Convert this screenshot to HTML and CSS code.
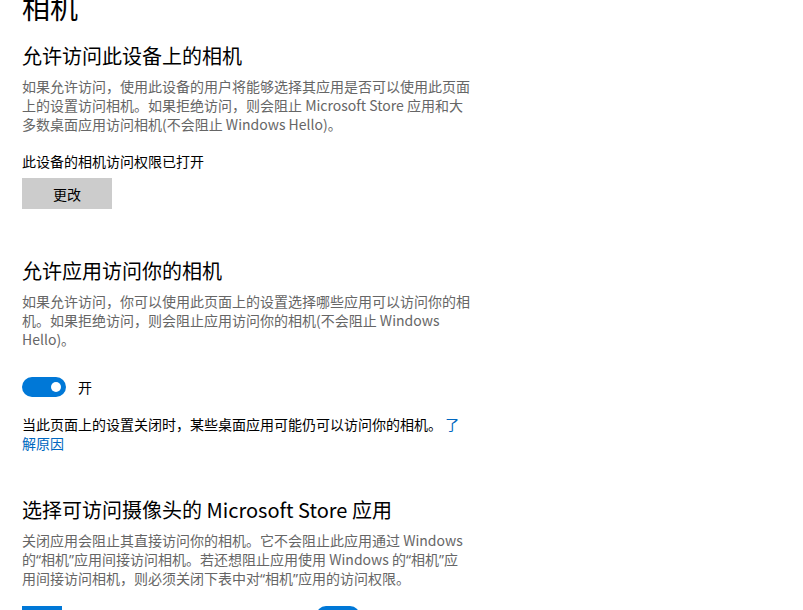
FILE: index.html
```html
<!DOCTYPE html>
<html lang="zh-CN">
<head>
<meta charset="utf-8">
<title>相机</title>
<link rel="stylesheet" href="styles.css">
</head>
<body>
<main class="page">
  <h1 class="title">相机</h1>

  <section class="section">
    <h2 class="heading">允许访问此设备上的相机</h2>
    <p class="desc">如果允许访问，使用此设备的用户将能够选择其应用是否可以使用此页面<br>上的设置访问相机。如果拒绝访问，则会阻止 Microsoft Store 应用和大<br>多数桌面应用访问相机(不会阻止 Windows Hello)。</p>
    <p class="status">此设备的相机访问权限已打开</p>
    <button class="btn">更改</button>
  </section>

  <section class="section section-2">
    <h2 class="heading">允许应用访问你的相机</h2>
    <p class="desc">如果允许访问，你可以使用此页面上的设置选择哪些应用可以访问你的相<br>机。如果拒绝访问，则会阻止应用访问你的相机(不会阻止 Windows<br>Hello)。</p>
    <div class="toggle-row">
      <span class="toggle"><span class="knob"></span></span>
      <span class="toggle-label">开</span>
    </div>
    <p class="note">当此页面上的设置关闭时，某些桌面应用可能仍可以访问你的相机。 <a class="link" href="#">了<br>解原因</a></p>
  </section>

  <section class="section section-3">
    <h2 class="heading">选择可访问摄像头的 Microsoft Store 应用</h2>
    <p class="desc">关闭应用会阻止其直接访问你的相机。它不会阻止此应用通过 Windows<br>的<span class="q">“</span>相机<span class="q">”</span>应用间接访问相机。若还想阻止应用使用 Windows 的<span class="q">“</span>相机<span class="q">”</span>应<br>用间接访问相机，则必须关闭下表中对<span class="q">“</span>相机<span class="q">”</span>应用的访问权限。</p>
    <div class="app-row">
      <span class="app-icon"></span>
      <span class="app-spacer"></span>
      <span class="toggle"><span class="knob"></span></span>
    </div>
  </section>
</main>
</body>
</html>
```

FILE: styles.css
```css
html, body {
  margin: 0;
  padding: 0;
  background: #ffffff;
}

body {
  font-family: "Noto Sans CJK SC", "Noto Sans", sans-serif;
  color: #000000;
  overflow: hidden;
}

.page {
  padding: 0 22px;
}

.title {
  margin: -11px 0 0;
  font-size: 28px;
  line-height: 36px;
  font-weight: 400;
}

.section {
  margin-top: 17px;
}

.section-2 {
  margin-top: 48px;
}

.section-3 {
  margin-top: 43px;
}

.heading {
  margin: 0;
  font-size: 20px;
  line-height: 28px;
  font-weight: 400;
}

.desc {
  margin: 7px 0 0;
  font-size: 14px;
  line-height: 19px;
  color: #666666;
}

.q {
  font-family: "Noto Sans", "DejaVu Sans", sans-serif;
}

.status {
  margin: 17px 0 0;
  font-size: 14px;
  line-height: 20px;
}

.btn {
  display: block;
  margin-top: 7px;
  width: 90px;
  height: 31px;
  border: 0;
  padding: 0;
  background: #cccccc;
  font-family: inherit;
  font-size: 14px;
  color: #000000;
}

.toggle-row {
  display: flex;
  align-items: center;
  margin-top: 28px;
  height: 20px;
}

.toggle {
  position: relative;
  display: block;
  width: 44px;
  height: 20px;
  border-radius: 10px;
  background: #0078d7;
  flex: none;
}

.knob {
  position: absolute;
  right: 5px;
  top: 5px;
  width: 10px;
  height: 10px;
  border-radius: 50%;
  background: #ffffff;
}

.toggle-label {
  margin-left: 12px;
  font-size: 14px;
  line-height: 20px;
}

.note {
  margin: 18px 0 0;
  font-size: 14px;
  line-height: 19px;
}

.link {
  color: #0067c0;
  text-decoration: none;
}

.app-row {
  display: flex;
  align-items: flex-start;
  margin-top: 18px;
}

.app-icon {
  display: block;
  width: 40px;
  height: 40px;
  background: #0078d7;
  flex: none;
}

.app-spacer {
  display: block;
  width: 254px;
  flex: none;
}
```
